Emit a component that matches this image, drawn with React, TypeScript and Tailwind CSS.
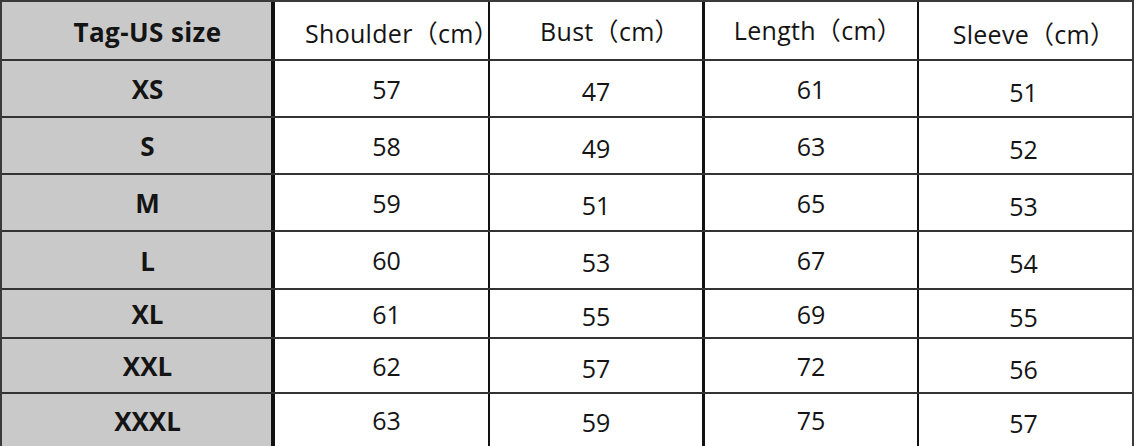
import React from "react";

const rows: { size: string; v: number[]; h: string }[] = [
  { size: "XS", v: [57, 47, 61, 51], h: "h-[57px]" },
  { size: "S", v: [58, 49, 63, 52], h: "h-[57px]" },
  { size: "M", v: [59, 51, 65, 53], h: "h-[57px]" },
  { size: "L", v: [60, 53, 67, 54], h: "h-[58px]" },
  { size: "XL", v: [61, 55, 69, 55], h: "h-[49px]" },
  { size: "XXL", v: [62, 57, 72, 56], h: "h-[55px]" },
  { size: "XXXL", v: [63, 59, 75, 57], h: "h-[52px]" },
];

const font = { fontFamily: '"Open Sans", "Noto Sans CJK SC", sans-serif' };

export default function App() {
  return (
    <div className="w-[1134px] h-[446px] bg-white overflow-hidden" style={font}>
      <div className="w-[1134px] h-[446px] flex flex-col border-t-2 border-l-2 border-r-2 border-[#3a3a3a] text-[#141414]">
        {/* header */}
        <div className="flex h-[59px] border-b-2 border-[#333] shrink-0">
          <div className="w-[273px] bg-[#c9c9c9] border-r-4 border-[#111] flex items-center justify-center pl-[22px] pt-[4px] text-[26px] tracking-[0.4px] font-bold whitespace-nowrap">
            Tag-US size
          </div>
          <div className="w-[215px] border-r-2 border-[#111] flex items-center justify-center pl-[41px] pt-[6px] text-[25px] tracking-[0.3px] whitespace-nowrap">
            Shoulder（cm）
          </div>
          <div className="w-[215px] border-r-[3px] border-[#111] flex items-center justify-center pl-[28px] pt-[3px] text-[25px] tracking-[0.3px] whitespace-nowrap">
            Bust（cm）
          </div>
          <div className="w-[214px] border-r-2 border-[#111] flex items-center justify-center pl-[14px] pt-[1px] text-[25px] tracking-[0.3px] whitespace-nowrap">
            Length（cm）
          </div>
          <div className="w-[213px] flex items-center justify-center pl-[17px] pt-[8px] text-[25px] tracking-[0.3px] whitespace-nowrap">
            Sleeve（cm）
          </div>
        </div>
        {rows.map((r, i) => (
          <div
            key={r.size}
            className={`flex shrink-0 ${r.h} ${i < rows.length - 1 ? "border-b-2 border-[#333]" : ""}`}
          >
            <div className="w-[273px] bg-[#c9c9c9] border-r-4 border-[#111] flex items-center justify-center pl-[22px] pt-[2px] text-[26px] font-bold">
              {r.size}
            </div>
            <div className="w-[215px] border-r-2 border-[#111] flex items-center justify-center pl-[10px] pt-[2px] text-[25px]">
              {r.v[0]}
            </div>
            <div className="w-[215px] border-r-[3px] border-[#111] flex items-center justify-center pt-[6px] text-[25px]">
              {r.v[1]}
            </div>
            <div className="w-[214px] border-r-2 border-[#111] flex items-center justify-center pt-[2px] text-[25px]">
              {r.v[2]}
            </div>
            <div className="w-[213px] flex items-center justify-center pr-[4px] pt-[8px] text-[25px]">
              {r.v[3]}
            </div>
          </div>
        ))}
      </div>
    </div>
  );
}
